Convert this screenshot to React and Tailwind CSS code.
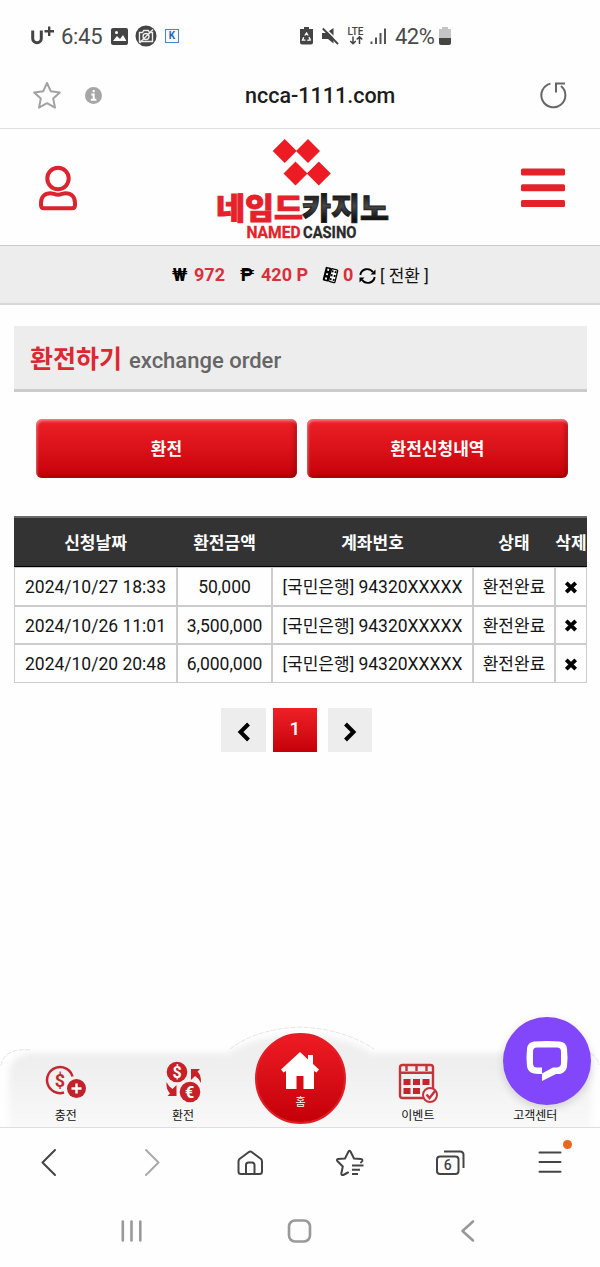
const orders = [
  { date: '2024/10/27 18:33', amount: '50,000', account: '94320XXXXX', bank: '[국민은행]', status: '환전완료' },
  { date: '2024/10/26 11:01', amount: '3,500,000', account: '94320XXXXX', bank: '[국민은행]', status: '환전완료' },
  { date: '2024/10/20 20:48', amount: '6,000,000', account: '94320XXXXX', bank: '[국민은행]', status: '환전완료' },
]

function StatusBar() {
  return (
    <div className="flex h-[72px] shrink-0 items-center pl-[31px] text-[#4a4a4a]">
      {/* CARRIER, CLOCK, NOTIFICATIONS */}
      <div className="flex w-[269px] items-center">
        <svg width="24" height="20" viewBox="0 0 24 20" fill="none" stroke="#444" strokeWidth="3">
          <path d="M1.700 4.500v8a4.300 4.300 0 0 0 8.600 0v-8" />
          <path d="M18.200 0.500v9.500M13.500 5.300h9.500" strokeWidth="2.400" />
        </svg>
        <span className="ml-[6px] w-[50px] pt-px text-[22px] leading-none tracking-[-0.3px]">6:45</span>
        <svg width="17" height="17" viewBox="0 0 17 17">
          <rect width="17" height="17" rx="2" fill="#444" />
          <path d="M2 13l4-5 3 3 3-4 3.500 6z" fill="#fff" />
          <circle cx="5.500" cy="4.500" r="1.500" fill="#fff" />
        </svg>
        <svg className="ml-[7px]" width="22" height="22" viewBox="0 0 22 22" fill="none" stroke="#eee" strokeWidth="1.400">
          <circle cx="11" cy="11" r="10.500" fill="#444" stroke="none" />
          <path d="M4.500 7.500h3l1.200-2h4.600l1.200 2h3v9h-13z" />
          <circle cx="11" cy="11.500" r="3" />
          <path d="M4.500 18L18 4.500" />
        </svg>
        <div className="ml-[8px] flex h-[14px] w-[14px] items-center justify-center border border-[#4a86c5] bg-[#f4faff] text-[10px] font-bold leading-none text-[#2867ad]">
          K
        </div>
      </div>

      {/* SYSTEM ICONS */}
      <div className="flex items-center">
        <svg width="13" height="18" viewBox="0 0 13 18">
          <path d="M4 0h5v2h4v13.500a2 2 0 0 1-2 2H2a2 2 0 0 1-2-2V2h4z" fill="#444" />
          <path d="M4.800 8.500L6.500 6l1.700 2.500M9 10l1.300 3-3 .300M3.700 10.200l-1.200 3h3" fill="none" stroke="#fff" strokeWidth="1.300" />
        </svg>
        <svg className="ml-[9px]" width="18" height="18" viewBox="0 0 18 18">
          <path d="M0 6h4l7.500-5v15.500L6 12H0z" fill="#444" />
          <path d="M2 0.500L17.500 15.500" stroke="#fff" strokeWidth="1.600" />
          <path d="M.800 1.500L16 17" stroke="#444" strokeWidth="1.800" />
        </svg>
        <svg className="ml-[7px]" width="19" height="20" viewBox="0 0 19 20">
          <text x="0.500" y="8.700" fontSize="10" fontFamily="Roboto" fontWeight="500" fill="#444">LTE</text>
          <path d="M6 10.500v7M3.200 15l2.800 2.800L8.800 15M12.500 18v-7M9.700 13.500l2.800-2.800 2.800 2.800" fill="none" stroke="#444" strokeWidth="1.500" />
        </svg>
        <svg className="ml-[4px]" width="17" height="17" viewBox="0 0 17 17" fill="#555">
          <rect x="0.500" y="13.500" width="2" height="2.500" />
          <rect x="5" y="9.500" width="2" height="6.500" />
          <rect x="9.500" y="5" width="2" height="11" />
          <rect x="14" y="0.500" width="2" height="15.500" />
        </svg>
        <span className="ml-[8px] w-[44px] pt-px text-[22px] leading-none tracking-[-0.500px]">42%</span>
        <svg width="12" height="18" viewBox="0 0 12 18">
          <path d="M3 0h6v2h3v10H0V2h3z" fill="#c4c4c4" />
          <path d="M0 11h12v5a2 2 0 0 1-2 2H2a2 2 0 0 1-2-2z" fill="#444" />
        </svg>
      </div>
    </div>
  )
}

function AddressBar() {
  return (
    <div className="flex h-[57px] shrink-0 items-center border-b border-[#dedede] pb-[10px] pl-[32px] pr-[33px]">
      <div className="flex w-[213px] items-center gap-[23px]">
        <svg width="30" height="29" viewBox="0 0 30 29" fill="none" stroke="#a2a2a2" strokeWidth="2" strokeLinejoin="round">
          <path d="M15 2l3.800 8.300 9 1.100-6.600 6.200 1.800 9L15 22.200 7 26.600l1.800-9-6.600-6.200 9-1.100z" />
        </svg>
        <svg width="17" height="17" viewBox="0 0 17 17">
          <circle cx="8.500" cy="8.500" r="8.500" fill="#a6a6a6" />
          <path d="M8.700 3v2.200M6.300 7.500h2.400v5M5.800 12.800h5.600" stroke="#fff" strokeWidth="2" fill="none" />
        </svg>
      </div>
      <span className="flex-1 pt-px text-[21.500px] font-medium leading-none text-[#1c1c1c]">ncca-1111.com</span>
      <svg width="27" height="27" viewBox="0 0 27 27" fill="none" stroke="#666" strokeWidth="2">
        <path d="M10.500 1.600A12 12 0 1 0 21 4" />
        <path d="M16 10.500V1.500h9" />
      </svg>
    </div>
  )
}

function Logo() {
  return (
    <svg width="176" height="106" viewBox="215 138 176 106">
      <defs>
        <linearGradient id="logoDark" x1="0" y1="0" x2="0" y2="1">
          <stop offset="0.200" stopColor="#111" />
          <stop offset="0.500" stopColor="#484848" />
          <stop offset="0.800" stopColor="#111" />
        </linearGradient>
      </defs>
      <path
        fill="#ed1c24"
        d="M284.700 141l12 12-12 12-12-12zM308 141l12 12-12 12-12-12zM295.500 163.500l12 12-12 12-12-12zM318.800 163.500l12 12-12 12-12-12z"
      />
      <g fontFamily="'Noto Sans CJK KR'" fontWeight="900" fontSize="30">
        <text x="216" y="221" fill="#e5212a" stroke="#e5212a" strokeWidth="0.900" textLength="87" lengthAdjust="spacingAndGlyphs">네임드</text>
        <text x="302" y="221" fill="url(#logoDark)" stroke="#1c1c1c" strokeWidth="0.900" textLength="87" lengthAdjust="spacingAndGlyphs">카지노</text>
      </g>
      <g fontFamily="Roboto" fontWeight="700" fontSize="16">
        <text x="246.500" y="239.500" fill="#e5212a" stroke="#e5212a" strokeWidth="0.300" textLength="54" lengthAdjust="spacingAndGlyphs">NAMED</text>
        <text x="303" y="239.500" fill="#2b2b2b" stroke="#2b2b2b" strokeWidth="0.300" textLength="53.500" lengthAdjust="spacingAndGlyphs">CASINO</text>
      </g>
    </svg>
  )
}

function SiteHeader() {
  return (
    <header className="flex h-[117px] shrink-0 items-center border-b border-[#c9c9c9] pt-[2px] pl-[38px]">
      <svg width="40" height="46" viewBox="0 0 40 46" fill="none" stroke="#dc2430" strokeWidth="4">
        <circle cx="20" cy="13.500" r="10.700" />
        <path d="M12.500 28.300c-6 0-9.500 4-9.500 9.500v2.500q0 3 3 3h28q3 0 3-3v-2.500c0-5.500-3.500-9.500-9.500-9.500-3 0-4 1.400-7.500 1.400s-4.500-1.400-7.500-1.400z" />
      </svg>
      <div className="ml-[137px] pt-px"><Logo /></div>
      <svg className="ml-[130px]" width="44" height="40" viewBox="0 0 44 40" fill="#e4222a">
        <rect y="0.500" width="44" height="7" rx="1.500" />
        <rect y="16.200" width="44" height="7" rx="1.500" />
        <rect y="32" width="44" height="7" rx="1.500" />
      </svg>
    </header>
  )
}

function BalanceBar() {
  return (
    <div className="flex h-[59px] shrink-0 items-center border-b-2 border-[#d8d8d8] bg-[#ededed] pl-[172px] text-[18px] font-bold leading-none text-[#d9303a]">
      <span className="w-[22px] text-[19px] text-black">₩</span>
      <span className="w-[46px]">972</span>
      <span className="w-[21px] text-[19px] text-black">₱</span>
      <span className="w-[61px]">420 P</span>
      <svg width="17" height="18" viewBox="0 0 17 18">
        <g transform="rotate(14 8.500 9)">
          <rect x="2" y="2" width="5.800" height="14" fill="#000" rx="1" />
          <rect x="8" y="2.500" width="6.500" height="13" fill="#fff" stroke="#000" strokeWidth="1.300" rx="1" />
          <path d="M5 3.500v2M5 8v2M5 12.500v2" stroke="#fff" strokeWidth="1.800" />
          <path d="M9.700 4v2M9.700 8v2M9.700 12v2M12.800 4v2M12.800 8v2M12.800 12v2" stroke="#000" strokeWidth="1.900" />
        </g>
      </svg>
      <span className="ml-[4px] w-[16px]">0</span>
      <svg className="mt-[2px]" width="17" height="16" viewBox="0 0 17 16" fill="none" stroke="#000" strokeWidth="1.900">
        <path d="M1.300 7A7 7 0 0 1 14 4.200M15.700 9A7 7 0 0 1 3 11.800" />
        <path d="M16.500 1.500v5h-5zM.500 14.500v-5h5z" fill="#000" stroke="none" />
      </svg>
      <span className="ml-[4px] pt-[4px] text-[17px] font-normal text-[#111]">[ 전환 ]</span>
    </div>
  )
}

function RedButton({ children }) {
  return (
    <button className="h-[59px] flex-1 rounded-[6px] bg-linear-to-b from-[#ee1f27] to-[#c60007] pt-[2px] text-[17px] font-bold leading-none text-white shadow-[inset_1px_2px_3px_rgba(255,255,255,0.45),inset_-2px_-2px_4px_rgba(110,0,0,0.5)]">
      {children}
    </button>
  )
}

function OrderTable() {
  const th = 'h-[51px] border-t-[2px] border-b border-t-[#6b6b6b] border-b-black bg-[#333] p-0 pt-[2px] font-bold whitespace-nowrap'
  const td = 'border border-[#ccc] p-0 pt-[2px] whitespace-nowrap'

  return (
    <table className="mt-[38px] ml-[14px] w-[573px] table-fixed border-separate border-spacing-0 text-center text-[17px] leading-[20px]">
      <colgroup>
        <col className="w-[163px]" />
        <col className="w-[95px]" />
        <col className="w-[201px]" />
        <col className="w-[82px]" />
        <col className="w-[32px]" />
      </colgroup>
      <thead className="text-white">
        <tr>
          <th className={th}>신청날짜</th>
          <th className={th}>환전금액</th>
          <th className={th}>계좌번호</th>
          <th className={th}>상태</th>
          <th className={th}>삭제</th>
        </tr>
      </thead>
      <tbody className="text-[#151515]">
        {orders.map((order) => (
          <tr key={order.date} className="h-[38.500px]">
            <td className={td}>
              <span className="text-[17.500px]">{order.date}</span>
            </td>
            <td className={td}>
              <span className="text-[17.500px]">{order.amount}</span>
            </td>
            <td className={td}>
              {order.bank} <span className="text-[17.500px]">{order.account}</span>
            </td>
            <td className={td}>{order.status}</td>
            <td className={td}>
              <svg className="mx-auto" width="13" height="13" viewBox="0 0 13 13" stroke="#000" strokeWidth="3.800">
                <path d="M1.300 1.800l9.400 9.400M10.700 1.800L1.300 11.200" />
              </svg>
            </td>
          </tr>
        ))}
      </tbody>
    </table>
  )
}

function Pagination() {
  return (
    <div className="mt-[25px] ml-[221px] flex h-[44px] items-center">
      <button className="grid h-[44px] w-[45px] place-items-center bg-[#ededed] pt-[4px]">
        <svg width="14" height="20" viewBox="0 0 14 20" fill="none" stroke="#000" strokeWidth="4">
          <path d="M11.500 2L3.500 10l8 8" />
        </svg>
      </button>
      <button className="ml-[7px] h-[44px] w-[44px] bg-linear-to-b from-[#ee1f27] to-[#c60007] text-[19px] font-medium text-white">
        1
      </button>
      <button className="ml-[11px] grid h-[44px] w-[44px] place-items-center bg-[#ededed] pt-[4px]">
        <svg width="14" height="20" viewBox="0 0 14 20" fill="none" stroke="#000" strokeWidth="4">
          <path d="M2.500 2l8 8-8 8" />
        </svg>
      </button>
    </div>
  )
}

function DepositIcon() {
  return (
    <svg width="42" height="42" viewBox="45 1061 42 42">
      <path d="M72.500 1076.500A13 13 0 1 0 64 1092.500" fill="none" stroke="#c4282f" strokeWidth="2.500" />
      <text x="60" y="1086.500" fontSize="18" fontFamily="Roboto" fontWeight="700" textAnchor="middle" fill="#c4282f">$</text>
      <circle cx="76.500" cy="1088.500" r="9.500" fill="#c4222a" />
      <path d="M76.500 1083.500v10M71.500 1088.500h10" stroke="#fff" strokeWidth="2.400" />
    </svg>
  )
}

function ExchangeIcon() {
  return (
    <svg width="42" height="42" viewBox="163 1061 42 42" fill="#c91f27">
      <circle cx="177" cy="1072" r="10.300" />
      <circle cx="190" cy="1092" r="10.300" />
      <path d="M191 1069h9l-2.500 2.500q4 4 3.500 11.500-2-4.500-6-7l-4 4zM176.500 1096h-9l2.500-2.500q-4-4-3.500-11.500 2 4.500 6 7l4-4z" />
      <g fill="#fff" fontFamily="Roboto" fontSize="16" fontWeight="700" textAnchor="middle">
        <text x="177" y="1077.500">$</text>
        <text x="189.500" y="1097.500">€</text>
      </g>
    </svg>
  )
}

function EventIcon() {
  return (
    <svg width="42" height="42" viewBox="398 1061 42 42" fill="none" stroke="#c4353b" strokeWidth="2.400">
      <rect x="401" y="1065" width="33" height="33" rx="2.500" />
      <path d="M401 1072.800h33M407.500 1064v7M417.500 1064v7M427.500 1064v7" />
      <path
        stroke="none"
        fill="#c4262d"
        d="M404.500 1079h7v6h-7zM414 1079h7v6h-7zM423.500 1079h7v6h-7zM404.500 1088h7v6h-7zM414 1088h7v6h-7z"
      />
      <circle cx="431" cy="1095" r="7" fill="#f5f5f5" strokeWidth="2" />
      <path d="M427.500 1094.500l3 3.500 5.500-7" strokeWidth="2.400" />
    </svg>
  )
}

function TabBar() {
  const item = 'flex flex-col items-center text-[12px] leading-[14px] text-[#111]'

  return (
    <div className="relative h-[118px] shrink-0 border-b border-[#dcdfe2]">
      <svg className="absolute inset-0" width="600" height="117" viewBox="0 0 600 117">
        <defs>
          <linearGradient id="barFill" x1="0" y1="0" x2="0" y2="1">
            <stop offset="0.300" stopColor="#efefef" />
            <stop offset="1" stopColor="#fafafa" />
          </linearGradient>
          <filter id="soft" x="-5%" y="-10%" width="110%" height="130%">
            <feGaussianBlur stdDeviation="3" />
          </filter>
        </defs>
        <path
          d="M9 125V62Q13 43 32 43H228C246 33 266 25 300 25S354 33 372 43H568Q587 43 591 62V125z"
          fill="url(#barFill)"
          filter="url(#soft)"
        />
        <path
          d="M1 56Q2 45 14 41Q20 39 30 40M230 39Q256 19 300 17Q344 19 374 39M572 40Q597 40 599 55"
          fill="none"
          stroke="#dedede"
          strokeWidth="0.800"
          strokeDasharray="5 1.500"
        />
      </svg>

      <div className="relative grid h-[117px] grid-cols-5 pl-[7px] pr-[6px]">
        <div className={item}>
          <div className="mt-[51px] mb-[6px]"><DepositIcon /></div>
          충전
        </div>
        <div className={item}>
          <div className="mt-[51px] mb-[6px] ml-px"><ExchangeIcon /></div>
          환전
        </div>
        <div className="flex justify-center pt-[23px]">
          <div className="flex h-[91px] w-[91px] shrink-0 flex-col items-center rounded-full border-2 border-[#e01f28] bg-linear-to-b from-[#ee1a23] to-[#c40008] pt-[16px] text-[11px] leading-[14px] text-white">
            <svg width="38" height="40" viewBox="0 0 38 40" fill="#fff">
              <path d="M19 1L0 18.500l2.500 3L5 20v18h10.500V25h7v13H33V20l2.500 1.500 2.500-3-6-5.500V4h-5v4.500z" />
            </svg>
            <span className="mt-[5px]">홈</span>
          </div>
        </div>
        <div className={item}>
          <div className="mt-[51px] mb-[6px] ml-px"><EventIcon /></div>
          이벤트
        </div>
        <div className={item}>
          <div className="mt-[99px] text-[12px]">고객센터</div>
        </div>
      </div>

      {/* CHAT WIDGET */}
      <button className="absolute top-[7px] left-[503px] grid h-[88px] w-[88px] place-items-center rounded-full bg-[#8247fb] shadow-[0_3px_8px_rgba(0,0,0,0.15)]">
        <svg width="42" height="42" viewBox="0 0 42 42">
          <path
            d="M8 1.500q13-1 26 0 6 .500 7 7 1 9 0 18-1 6-7 7.500h-4L16 41v-7q-4 0-8-.500-6-1-7-7-1-9 0-18 1-6.500 7-7z"
            fill="#fff"
          />
          <path d="M11 7.500h20q4 0 4 4v12q0 3.500-4 4h-4L16 33.500v-6h-5q-4 0-4-4v-12q0-4 4-4z" fill="#8247fb" />
        </svg>
      </button>
    </div>
  )
}

function BrowserToolbar() {
  return (
    <div className="grid h-[68px] shrink-0 grid-cols-6 place-items-center">
      <svg width="30" height="30" viewBox="0 0 30 30" fill="none" stroke="#444" strokeWidth="2" strokeLinecap="round" strokeLinejoin="round">
        <path d="M20 3L7.500 15.500 20 28" />
      </svg>
      <svg width="30" height="30" viewBox="0 0 30 30" fill="none" stroke="#aaa" strokeWidth="2" strokeLinecap="round" strokeLinejoin="round">
        <path d="M11 3l12.500 12.500L11 28" />
      </svg>
      <svg width="30" height="30" viewBox="0 0 30 30" fill="none" stroke="#444" strokeWidth="2" strokeLinejoin="round">
        <path d="M13.500 5.200L4.500 12q-1 1-1 2.500v10Q3.500 27 6 27h18.500q2.500 0 2.500-2.500v-10Q27 13 26 12l-9-6.800q-1.700-1.300-3.500 0z" />
        <path d="M11 27v-9q0-2.500 2.500-2.500h3.500q2.500 0 2.500 2.500v9" />
      </svg>
      <svg width="30" height="30" viewBox="0 0 30 30" fill="none" stroke="#444" strokeWidth="2" strokeLinecap="round" strokeLinejoin="round">
        <path d="M26 15.500l1.200-1.500q.700-1.700-1.200-2l-7-.500-3.500-7q-1-1.500-2 0l-3.500 7-7 .500q-1.700.500-.700 2l5.500 5.500-1.500 7q0 2 2 1.500l4.700-2.500" />
        <path d="M17 18.500h11.500M17 22.700h8M17 27h6" strokeLinecap="butt" />
      </svg>
      <svg width="30" height="30" viewBox="0 0 30 30" fill="none" stroke="#444" strokeWidth="2">
        <rect x="2" y="9.500" width="21.500" height="17.500" rx="3" />
        <path d="M9 4.500h16q3.500 0 3.500 3.500v13" />
        <text x="12.700" y="23.200" fontSize="14" fontFamily="Roboto" fontWeight="500" textAnchor="middle" fill="#444" stroke="none">6</text>
      </svg>
      <div className="relative">
        <svg width="30" height="30" viewBox="0 0 30 30" fill="none" stroke="#444" strokeWidth="2" strokeLinecap="round">
          <path d="M4.500 5.500h21M4.500 15h21M4.500 24.700h21" />
        </svg>
        <span className="absolute -top-[7px] left-[28px] h-[9px] w-[9px] rounded-full bg-[#ea661e]" />
      </div>
    </div>
  )
}

function SystemNav() {
  return (
    <div className="grid h-[71px] shrink-0 grid-cols-3 place-items-center pb-[2px] pl-[48px] pr-[48px]">
      <svg width="24" height="24" viewBox="0 0 24 24" stroke="#999" strokeWidth="2.600" strokeLinecap="round">
        <path d="M2.800 2.500v19M11.500 2.500v19M20.300 2.500v19" />
      </svg>
      <svg width="26" height="26" viewBox="0 0 26 26" fill="none" stroke="#999" strokeWidth="2.600">
        <rect x="2" y="2.500" width="21" height="21" rx="6" />
      </svg>
      <svg width="24" height="24" viewBox="0 0 24 24" fill="none" stroke="#999" strokeWidth="2.600" strokeLinecap="round" strokeLinejoin="round">
        <path d="M17 2.500L6.500 12l10.500 9.500" />
      </svg>
    </div>
  )
}

export default function App() {
  return (
    <div className="flex h-[1267px] w-[600px] flex-col overflow-hidden bg-[#fefefe] font-['Roboto','Noto_Sans_CJK_KR',sans-serif]">
      <StatusBar />
      <AddressBar />
      <SiteHeader />
      <BalanceBar />

      <main className="flex-1">
        <h1 className="mt-[21px] mr-[13px] ml-[14px] flex h-[66px] items-center border-b-[3px] border-[#cbcbcb] bg-[#ededed] pl-[16px] leading-none">
          <span className="w-[99px] pt-[4px] text-[25px] font-bold text-[#dc2832]">환전하기</span>
          <span className="pt-[6px] text-[22px] font-medium text-[#666]">exchange order</span>
        </h1>

        <div className="mt-[27px] flex gap-[10px] pl-[36px] pr-[32px]">
          <RedButton>환전</RedButton>
          <RedButton>환전신청내역</RedButton>
        </div>

        <OrderTable />
        <Pagination />
      </main>

      <TabBar />
      <BrowserToolbar />
      <SystemNav />
    </div>
  )
}
